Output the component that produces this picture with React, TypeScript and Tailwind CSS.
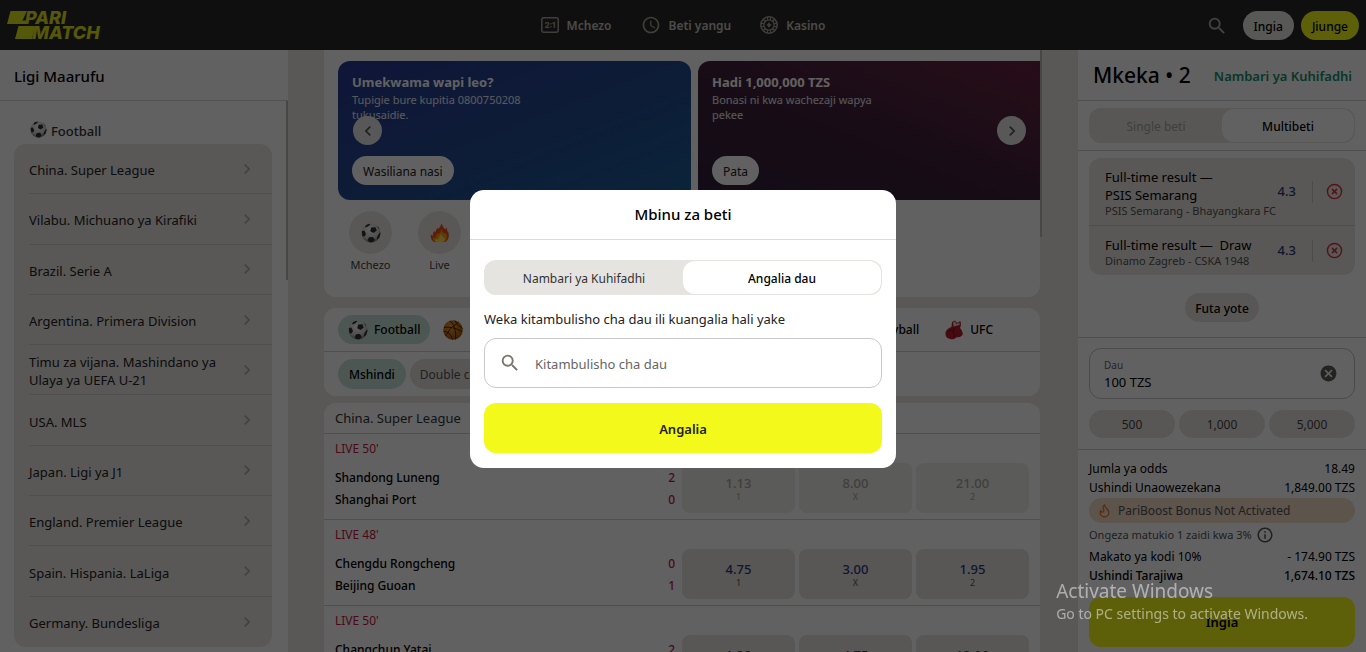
import type { ReactNode } from "react";
import { CircleX, Flame } from "lucide-react";
import {
    MdAccessTime,
    MdCancel,
    MdChevronLeft,
    MdChevronRight,
    MdInfoOutline,
    MdSearch,
} from "react-icons/md";

const leagues = [
    "China. Super League",
    "Vilabu. Michuano ya Kirafiki",
    "Brazil. Serie A",
    "Argentina. Primera Division",
    "Timu za vijana. Mashindano ya Ulaya ya UEFA U-21",
    "USA. MLS",
    "Japan. Ligi ya J1",
    "England. Premier League",
    "Spain. Hispania. LaLiga",
    "Germany. Bundesliga",
];

const matches = [
    { time: "50'", home: "Shandong Luneng", away: "Shanghai Port", score: [2, 0], odds: ["1.13", "8.00", "21.00"], locked: true },
    { time: "48'", home: "Chengdu Rongcheng", away: "Beijing Guoan", score: [0, 1], odds: ["4.75", "3.00", "1.95"], locked: false },
    { time: "50'", home: "Changchun Yatai", away: "Henan Songshan", score: [2, 1], odds: ["1.38", "4.75", "13.00"], locked: false },
];

const outcomes = ["1", "X", "2"];

function Logo() {
    return (
        <svg width="104" height="42" viewBox="0 -6 104 42" role="img" aria-label="Parimatch">
            <g fill="#dfe41f">
                <path d="M3.500 1H20L15.500 10.500H21L20 14H0Z" />
                <path d="M11.500 16H28L25 29H8Z" />
                <g fontFamily="Inter, sans-serif" fontWeight="800" fontStyle="italic" fontSize="18">
                    <text x="18" y="14">PARI</text>
                    <text x="25" y="29">MATCH</text>
                </g>
            </g>
        </svg>
    );
}

function SoccerBall({ className }: { className: string }) {
    return (
        <svg viewBox="0 0 20 20" className={className} aria-hidden="true">
            <defs>
                <radialGradient id="ball" cx="45%" cy="35%" r="65%">
                    <stop offset="0" stopColor="#fff" />
                    <stop offset="0.700" stopColor="#cfcfcf" />
                    <stop offset="1" stopColor="#777" />
                </radialGradient>
            </defs>
            <circle cx="10" cy="10" r="9.500" fill="url(#ball)" />
            <g fill="#303030">
                <path d="M10.200 4.500 14.500 4.200 15.700 7.600 12.700 10 9.200 8.200Z" />
                <path d="M5 1.900 8.600.7 9.300 1.600 6.500 3.700 4 4.400Z" />
                <path d="M.8 8 3.200 7.600 5 10.800 3.600 13.400 1.300 13Z" />
                <path d="M8.200 14.200 12 13.900 13.700 16.800 11.500 19.300 8 19 6.700 16.400Z" />
                <path d="M17 12.300 19.300 9.200 19.400 11 18.200 14.700 16.400 16.400 16 15Z" />
                <path d="M15.500 2.300 18.300 5.600 17.600 5.700Z" />
            </g>
        </svg>
    );
}

function Basketball() {
    return (
        <svg viewBox="0 0 20 20" className="size-5" aria-hidden="true">
            <defs>
                <radialGradient id="orange" cx="40%" cy="35%" r="65%">
                    <stop offset="0" stopColor="#ee9a2c" />
                    <stop offset="1" stopColor="#a8560f" />
                </radialGradient>
            </defs>
            <circle cx="10" cy="10" r="9.800" fill="url(#orange)" />
            <g fill="none" stroke="#3b2208" strokeWidth="0.900">
                <path d="M1 7.500Q9 6 19 11.500" />
                <path d="M7 .8Q14 7 12.500 19.500" />
                <path d="M2.500 16Q6 8 15.500 2" />
                <path d="M.6 11.500Q7 11 9.500 19.700" />
                <path d="M12 .6Q13 5 19.600 8.500" />
            </g>
        </svg>
    );
}

function Glove() {
    return (
        <svg viewBox="0 0 18 20" className="h-5 w-[18px]" aria-hidden="true">
            <path d="M7 2 10 .6 12 3 15.500 1 16 5 15 8Q18.500 11 17.500 15 15.500 17.500 11 17.500 9 20.200 5 19 0 18 .5 12.500 2 8 6.500 7Z" fill="#b81f2a" />
            <path d="M8 2.500 10 1.400 11.500 4 14.500 2.600 14.500 5 8.500 6.500Z" fill="#e9d5d5" />
            <path d="M9 8Q7 12 10 17.500M2.500 12Q5 9.500 8 10.500" stroke="#7c0f18" strokeWidth="0.900" fill="none" />
        </svg>
    );
}

function Fire() {
    return (
        <svg viewBox="0 0 20 20" className="size-5" aria-hidden="true">
            <path d="M11.500.5Q13 4 15 6.500L16.500 4.500Q17 8 18.500 10 20 15 15.500 19H4Q.2 16.500.8 11.500L3 13Q2.800 10 4 8L5.500 9.500Q6 6 8 4.500L8.500 6Q10.800 3.500 11.500.5Z" fill="#ef4a1c" />
            <path d="M11.500 6Q12 9.500 15 11L16 9.500Q18.500 16 14.500 19H5Q2.500 17 3 14L5.500 15Q5.500 11.500 8 10L8.500 11.500Q11 9.500 11.500 6Z" fill="#fb9a1b" />
            <path d="M11 11Q11.500 13.500 14.500 15 15.500 17.500 13 19.300H6.500Q4.500 18 5.500 16L8 16.500Q8.500 14.500 11 11Z" fill="#ffe04a" />
        </svg>
    );
}

function ScoreIcon() {
    return (
        <svg viewBox="0 0 18 16" className="h-4 w-[18px]" aria-hidden="true">
            <rect x="0.800" y="0.800" width="16.400" height="14.400" rx="2" fill="none" stroke="currentColor" strokeWidth="1.500" />
            <text x="9" y="10.500" textAnchor="middle" fontSize="7.500" fontWeight="800" fontFamily="Inter, sans-serif" fill="currentColor">2:1</text>
        </svg>
    );
}

function ChipIcon() {
    return (
        <svg viewBox="0 0 18 18" className="size-[18px]" fill="none" stroke="currentColor" aria-hidden="true">
            <circle cx="9" cy="9" r="8.200" strokeWidth="1.500" />
            <circle cx="9" cy="9" r="5.200" strokeWidth="1.300" />
            <path d="M7.500 1v2.800M10.500 1v2.800M7.500 14.200V17M10.500 14.200V17M1 7.500h2.800M1 10.500h2.800M14.200 7.500H17M14.200 10.500H17" strokeWidth="1" />
            <path d="M3.200 3.200 5.300 5.300M14.800 3.200 12.700 5.300M3.200 14.800 5.300 12.700M14.800 14.800 12.700 12.700" strokeWidth="1.300" />
            <path d="M9 6.800v4.400M6.800 9h4.400" strokeWidth="1.700" />
        </svg>
    );
}

function NavItem({ icon, label }: { icon: ReactNode; label: string }) {
    return (
        <a href="#" className="flex items-center gap-2 text-[#a8a59a]">
            {icon}
            <span className="pt-[2px] text-[12px] font-semibold text-[#c8c4bc]">{label}</span>
        </a>
    );
}

function Header() {
    return (
        <header className="grid h-[50px] shrink-0 grid-cols-[1fr_auto_1fr] items-center bg-[#292929] px-[7px]">
            <a href="#"><Logo /></a>
            <nav className="flex items-center gap-[29px]">
                <NavItem icon={<ScoreIcon />} label="Mchezo" />
                <NavItem icon={<MdAccessTime className="size-5" />} label="Beti yangu" />
                <NavItem icon={<ChipIcon />} label="Kasino" />
            </nav>
            <div className="flex items-center justify-end gap-[7px] pt-px">
                <button aria-label="Tafuta" className="mr-2 text-[#b0ada4]">
                    <MdSearch className="size-[22px]" />
                </button>
                <button className="h-[29px] rounded-full bg-[#e8e6e2] px-[11px] pt-[2px] text-[12px] font-medium">Ingia</button>
                <button className="h-[29px] rounded-full bg-[#f3f91a] px-[11px] pt-[2px] text-[12px] font-medium">Jiunge</button>
            </div>
        </header>
    );
}

function Sidebar() {
    return (
        <aside className="flex w-72 shrink-0 flex-col bg-white">
            <h2 className="flex h-[51px] shrink-0 items-center border-b border-[#d5d5d5] px-[14px] pt-[2px] text-[15px] font-medium">Ligi Maarufu</h2>
            <div className="flex min-h-0 flex-1">
                <div className="min-w-0 flex-1 overflow-hidden pr-[14px] pl-[14px]">
                    <div className="flex h-[43px] items-end gap-1 pb-[3px] pl-4 text-[13px] font-medium text-[#333]">
                        <SoccerBall className="mb-[3px] size-[17px]" />
                        Football
                    </div>
                    <ul className="grid h-[503px] auto-rows-fr rounded-xl bg-[#eae7e2] pl-[15px]">
                        {leagues.map((name) => (
                            <li key={name} className="border-b border-[#d2cfca] last:border-0">
                                <a href="#" className="flex h-full items-center justify-between pr-[15px] text-[13px] leading-[18px] text-[#222]">
                                    <span className="w-[190px] pt-[3px]">{name}</span>
                                    <MdChevronRight className="size-5 text-[#b2aea8]" />
                                </a>
                            </li>
                        ))}
                    </ul>
                </div>
                <div className="h-[179px] w-[2px] bg-[#bdbcb2]"></div>
            </div>
        </aside>
    );
}

function Banner({ title, text, action, className }: { title: string; text: string; action: string; className: string }) {
    return (
        <div className={`flex h-[139px] w-[353px] shrink-0 flex-col items-start rounded-xl px-[14px] pt-3 pb-[15px] text-white ${className}`}>
            <h3 className="text-[13px] leading-[19px] font-bold">{title}</h3>
            <p className="w-[180px] text-[11px] leading-[15px] text-white/90">{text}</p>
            <button className="mt-auto h-[29px] rounded-full bg-white px-[11px] pt-[2px] text-[12px] text-[#222]">{action}</button>
        </div>
    );
}

function QuickLink({ icon, label }: { icon: ReactNode; label: string }) {
    return (
        <a href="#" className="flex w-[69px] flex-col items-center gap-[3px] text-[11px] leading-4 text-[#444]">
            <span className="grid size-[43px] place-items-center rounded-full bg-[#eae7e2]">{icon}</span>
            {label}
        </a>
    );
}

function Promo() {
    return (
        <section className="h-[247px] shrink-0 overflow-hidden rounded-b-xl bg-white">
            <div className="relative">
                <div className="flex gap-[7px] pt-[11px] pl-[14px]">
                    <Banner
                        title="Umekwama wapi leo?"
                        text="Tupigie bure kupitia 0800750208 tukusaidie."
                        action="Wasiliana nasi"
                        className="bg-linear-to-br from-[#2a3894] via-[#234a90] to-[#1b5f98]"
                    />
                    <Banner
                        title="Hadi 1,000,000 TZS"
                        text="Bonasi ni kwa wachezaji wapya pekee"
                        action="Pata"
                        className="bg-linear-to-tr from-[#30203a] via-[#40213c] to-[#6a2140]"
                    />
                </div>
                <button aria-label="Nyuma" className="absolute top-[66px] left-[29px] grid size-[29px] place-items-center rounded-full bg-[#e8e8e8] text-[#555]">
                    <MdChevronLeft className="size-5" />
                </button>
                <button aria-label="Mbele" className="absolute top-[66px] right-[14px] grid size-[29px] place-items-center rounded-full bg-[#e8e8e8] text-[#555]">
                    <MdChevronRight className="size-5" />
                </button>
            </div>
            <div className="flex pt-[11px] pl-3">
                <QuickLink icon={<SoccerBall className="size-5" />} label="Mchezo" />
                <QuickLink icon={<Fire />} label="Live" />
            </div>
        </section>
    );
}

function Filters() {
    return (
        <section className="shrink-0 rounded-xl bg-white">
            <div className="flex h-11 items-center border-b border-[#d0d0d0] pr-[47px] pl-[14px] text-[12px] font-medium">
                <button className="flex h-[29px] items-center gap-[6px] rounded-full bg-[#c9e4d9] px-[10px]">
                    <SoccerBall className="size-5" />
                    <span className="pt-px">Football</span>
                </button>
                <button className="ml-[13px] flex items-center gap-[7px]">
                    <Basketball />
                </button>
                <button className="ml-auto pt-px">Volleyball</button>
                <button className="ml-[26px] flex items-center gap-[7px]">
                    <Glove />
                    <span className="pt-px">UFC</span>
                </button>
            </div>
            <div className="flex h-11 items-center gap-1 pl-[14px] text-[12px]">
                <button className="h-[30px] rounded-full bg-[#c9e4d9] px-[11px] pt-px font-medium">Mshindi</button>
                <button className="h-[30px] rounded-full bg-[#e4e1dc] px-[10px] pt-px text-[#555]">Double chance</button>
            </div>
        </section>
    );
}

function Matches() {
    return (
        <section className="shrink-0 rounded-t-xl bg-white">
            <h3 className="flex h-[31px] items-center border-b border-[#d0d0d0] px-[11px] pt-px text-[13px] text-[#333]">China. Super League</h3>
            {matches.map((match) => (
                <div key={match.home} className="flex h-[86px] gap-[7px] border-b border-[#d0d0d0] pr-[11px] pl-[11px]">
                    <div className="flex-1 pt-[5px]">
                        <p className="text-[12px] leading-5 text-[#c4183c]">LIVE {match.time}</p>
                        <p className="mt-2 flex justify-between text-[12px] leading-[22px] font-medium">
                            {match.home}
                            <span className="text-[#c4183c]">{match.score[0]}</span>
                        </p>
                        <p className="flex justify-between text-[12px] leading-[22px] font-medium">
                            {match.away}
                            <span className="text-[#c4183c]">{match.score[1]}</span>
                        </p>
                    </div>
                    <div className="flex gap-1 pt-[29px]">
                        {match.odds.map((odd, i) => (
                            <button
                                key={outcomes[i]}
                                disabled={match.locked}
                                className="flex h-[50px] w-[113px] flex-col items-center justify-center rounded-lg bg-[#e8e5e0] pt-[2px] text-[#2a3a80] disabled:bg-[#f0eeea] disabled:text-[#a9a6a0]"
                            >
                                <span className="text-[13px] leading-4 font-medium">{odd}</span>
                                <span className={match.locked ? "text-[9px] leading-3" : "text-[9px] leading-3 text-[#555]"}>{outcomes[i]}</span>
                            </button>
                        ))}
                    </div>
                </div>
            ))}
        </section>
    );
}

function BetRow({ pick, teams, className }: { pick: ReactNode; teams: string; className?: string }) {
    return (
        <li className={`flex items-center pr-3 pl-4 ${className}`}>
            <div className="min-w-0 flex-1 pt-px">
                <p className="text-[13px] leading-[18px]">{pick}</p>
                <p className="text-[11px] leading-[13px] whitespace-nowrap text-[#555]">{teams}</p>
            </div>
            <span className="pr-4 text-[13px] font-medium text-[#2a3a80]">4.3</span>
            <span className="h-[22px] w-px bg-[#c8c5c0]"></span>
            <button aria-label="Ondoa" className="ml-[13px] text-[#d8323c]">
                <CircleX className="size-[17px]" />
            </button>
        </li>
    );
}

function Total({ label, value }: { label: string; value: string }) {
    return (
        <div className="flex justify-between text-[12px] leading-[19px]">
            <dt>{label}</dt>
            <dd>{value}</dd>
        </div>
    );
}

function Betslip() {
    return (
        <aside className="flex w-72 shrink-0 flex-col bg-white">
            <div className="flex h-[51px] items-center justify-between border-b border-[#d0d0d0] pt-[2px] pr-[14px] pl-[15px]">
                <h2 className="text-[21px] font-medium">Mkeka • 2</h2>
                <a href="#" className="pt-[2px] text-[13px] font-semibold text-[#189068]">Nambari ya Kuhifadhi</a>
            </div>
            <div className="border-b border-[#d0d0d0] px-[11px] py-[7px]">
                <div className="grid h-[35px] grid-cols-2 rounded-xl bg-[#e6e4e0] p-px text-[12px]">
                    <button className="pt-[2px] text-[#aaa7a2]">Single beti</button>
                    <button className="rounded-xl bg-white pt-[2px] font-medium">Multibeti</button>
                </div>
            </div>
            <div className="border-b border-[#d0d0d0] px-[11px] pt-[7px] pb-[15px]">
                <ul className="rounded-xl bg-[#eae7e2]">
                    <BetRow
                        pick={<>Full-time result —<br />PSIS Semarang</>}
                        teams="PSIS Semarang - Bhayangkara FC"
                        className="h-[68px] border-b border-[#cccac5]"
                    />
                    <BetRow pick={<>Full-time result —&nbsp; Draw</>} teams="Dinamo Zagreb - CSKA 1948" className="h-[49px]" />
                </ul>
                <div className="flex justify-center pt-[18px]">
                    <button className="h-[29px] rounded-full bg-[#e8e5e0] px-[10px] pt-[2px] text-[12px] font-medium">Futa yote</button>
                </div>
            </div>
            <div className="border-b border-[#d0d0d0] px-[11px] pt-[10px] pb-[11px]">
                <div className="flex h-[51px] items-center rounded-xl border border-[#c4c4c4] pr-4 pl-[14px]">
                    <div className="min-w-0 flex-1 pt-[2px]">
                        <label htmlFor="stake" className="block text-[10px] leading-[14px] text-[#666]">Dau</label>
                        <input id="stake" defaultValue="100 TZS" className="block w-full text-[13px] leading-5 outline-none" />
                    </div>
                    <button aria-label="Futa" className="text-[#5e5d58]">
                        <MdCancel className="size-[19px]" />
                    </button>
                </div>
                <div className="mt-[11px] grid grid-cols-3 gap-1 text-[12px] text-[#444]">
                    <button className="h-7 rounded-full bg-[#e8e5e0] pt-px">500</button>
                    <button className="h-7 rounded-full bg-[#e8e5e0] pt-px">1,000</button>
                    <button className="h-7 rounded-full bg-[#e8e5e0] pt-px">5,000</button>
                </div>
            </div>
            <div className="px-[11px] pt-[9px]">
                <dl>
                    <Total label="Jumla ya odds" value="18.49" />
                    <Total label="Ushindi Unaowezekana" value="1,849.00 TZS" />
                </dl>
                <div className="mt-px flex h-[25px] items-center gap-[6px] rounded-full bg-[#f5dcc4] px-2 text-[12px] text-[#555]">
                    <Flame className="size-[15px] text-[#e87028]" />
                    <span className="pt-px">PariBoost Bonus Not Activated</span>
                </div>
                <p className="flex h-6 items-center gap-1 text-[11px] text-[#555]">
                    Ongeza matukio 1 zaidi kwa 3%
                    <MdInfoOutline className="size-[18px] text-[#555]" />
                </p>
                <dl>
                    <Total label="Makato ya kodi 10%" value="- 174.90 TZS" />
                    <div className="flex justify-between text-[12px] leading-[19px] font-medium">
                        <dt>Ushindi Tarajiwa</dt>
                        <dd>1,674.10 TZS</dd>
                    </div>
                </dl>
                <button className="mt-3 h-[50px] w-full rounded-xl bg-[#f3f91a] pt-[2px] text-[13px] font-semibold">Ingia</button>
            </div>
        </aside>
    );
}

function BetModal() {
    return (
        <div className="fixed inset-0 z-20 flex items-center justify-center bg-black/62 pt-[6px]">
            <div role="dialog" aria-labelledby="modal-title" className="w-full max-w-[426px] rounded-[14px] bg-white">
                <h2 id="modal-title" className="flex h-[50px] items-center justify-center border-b border-[#dadada] text-[15px] font-medium">Mbinu za beti</h2>
                <form className="px-[14px] pt-5 pb-[15px]">
                    <div className="grid h-[35px] grid-cols-2 rounded-xl bg-[#e6e4e0] p-px text-[12px]">
                        <button type="button" className="pt-[2px] text-[#333]">Nambari ya Kuhifadhi</button>
                        <button type="button" className="rounded-xl bg-white pt-[2px] font-medium">Angalia dau</button>
                    </div>
                    <label htmlFor="bet-id" className="flex h-[43px] items-center pt-[6px] text-[13px] text-[#222]">
                        Weka kitambulisho cha dau ili kuangalia hali yake
                    </label>
                    <div className="flex h-[50px] items-center gap-[14px] rounded-xl border border-[#c9c9c9] px-[14px]">
                        <MdSearch className="size-[22px] text-[#7a746b]" />
                        <input id="bet-id" placeholder="Kitambulisho cha dau" className="min-w-0 flex-1 pt-[3px] text-[13px] outline-none placeholder:text-[#666]" />
                    </div>
                    <button className="mt-[15px] h-[50px] w-full rounded-xl bg-[#f3f91a] pt-[3px] text-[13px] font-semibold text-[#222]">Angalia</button>
                </form>
            </div>
        </div>
    );
}

export default function App() {
    return (
        <div className="flex h-screen flex-col overflow-hidden bg-[#ece8e3] font-['Noto_Sans',sans-serif] text-black">
            <Header />
            <div className="flex min-h-0 flex-1">
                <Sidebar />
                <main className="flex min-w-0 flex-1 overflow-hidden px-9">
                    <div className="flex min-w-0 flex-1 flex-col">
                        <Promo />
                        <div className="flex flex-col gap-[7px] pt-[11px]">
                            <Filters />
                            <Matches />
                        </div>
                    </div>
                    <div className="h-[187px] w-[2px] bg-[#bdbcb2]"></div>
                </main>
                <Betslip />
            </div>
            <BetModal />
            <div className="pointer-events-none fixed right-[58px] bottom-[28px] z-30 text-white/50">
                <p className="text-[19px] leading-6">Activate Windows</p>
                <p className="text-[14px] leading-[21px]">Go to PC settings to activate Windows.</p>
            </div>
        </div>
    );
}
